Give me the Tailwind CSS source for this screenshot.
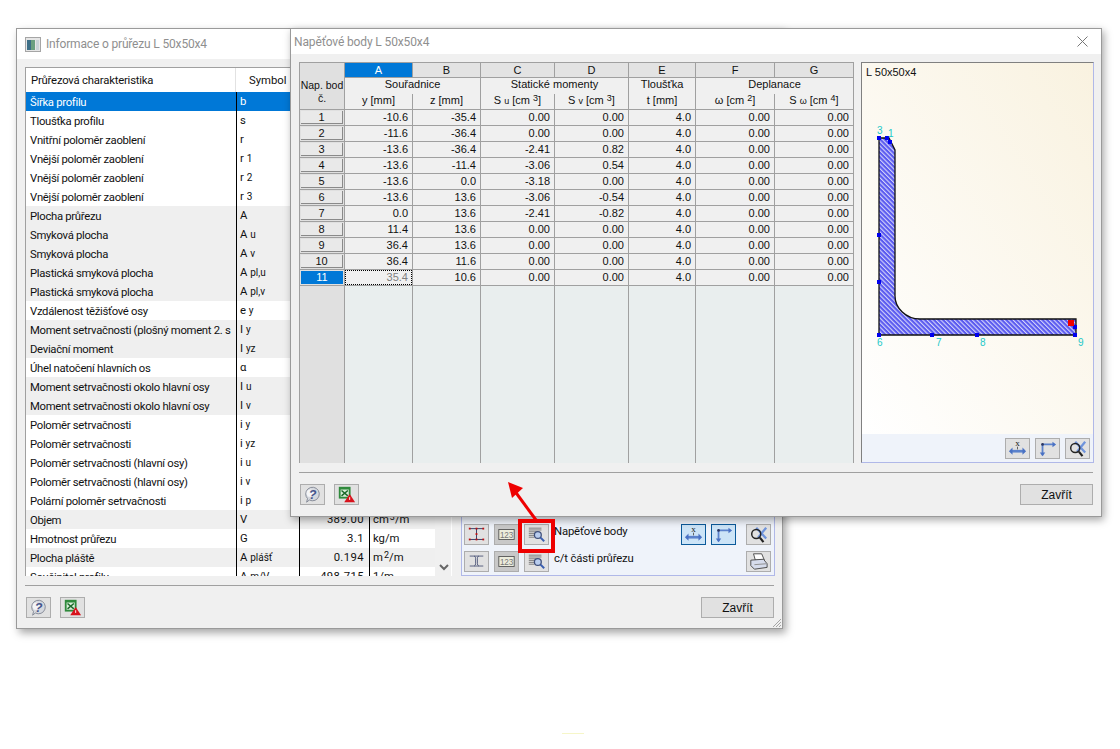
<!DOCTYPE html>
<html lang="en">
<head>
<meta charset="UTF-8">
<title>Napěťové body</title>
<script src="https://cdn.jsdelivr.net/npm/@tailwindcss/browser@4"></script>
</head>
<body class="bg-white overflow-hidden font-['Liberation_Sans',sans-serif]">

<!-- shared icons -->
<svg width="0" height="0" class="absolute">
  <defs>
    <pattern id="hatch" width="3.200" height="3.200" patternUnits="userSpaceOnUse" patternTransform="rotate(-45)">
      <rect width="3.200" height="3.200" fill="#5a5af0"/>
      <rect width="1.100" height="3.200" fill="#d4d4fa"/>
    </pattern>
  </defs>
  <symbol id="i-help" viewBox="0 0 25 21">
    <path d="M5 10a7.500 7.500 0 1 1 4 6.600L6 19l1-4a7 7 0 0 1-2-5z" fill="#d5d8de" stroke="#7f8592"/>
    <circle cx="10" cy="9" r="4" fill="#f4f5f7"/>
    <text x="12.500" y="15" text-anchor="middle" font-size="14" font-weight="700" font-style="italic" fill="#46558c" font-family="Liberation Sans">?</text>
  </symbol>
  <symbol id="i-excel" viewBox="0 0 25 21">
    <rect x="4" y="2" width="13" height="13" fill="#2f8a3c"/>
    <rect x="6" y="5" width="9" height="8" fill="#d9eeda"/>
    <path d="M7 6l7 6M14 6l-7 6" stroke="#1c6a2a" stroke-width="1.600"/>
    <path d="M16 10l6 9H10z" fill="#d8121c"/>
    <path d="M16 13.500v3" stroke="#fff"/>
  </symbol>
  <symbol id="i-section-red" viewBox="0 0 25 21">
    <path d="M5 4h15M5 16h15M12.500 4v12" stroke="#2a3560" fill="none"/>
    <g fill="#c01010"><rect x="4" y="3" width="2" height="2"/><rect x="11.500" y="3" width="2" height="2"/><rect x="19" y="3" width="2" height="2"/><rect x="4" y="15" width="2" height="2"/><rect x="11.500" y="15" width="2" height="2"/><rect x="19" y="15" width="2" height="2"/><rect x="11.500" y="9" width="2" height="2"/></g>
  </symbol>
  <symbol id="i-section" viewBox="0 0 25 21">
    <path d="M5 4.500h15M5 15.500h15M10 4.500c1.500.500 1.500 2 1.500 3v5.500c0 1-.5 2-1.500 2.500M15 4.500c-1.500.500-1.500 2-1.500 3v5.500c0 1 .5 2 1.500 2.500" stroke="#2a3560" stroke-width=".8" fill="none"/>
  </symbol>
  <symbol id="i-123" viewBox="0 0 25 21">
    <rect x="4" y="5" width="17" height="11" fill="#ececdc" stroke="#555"/>
    <text x="12.500" y="14" text-anchor="middle" font-size="9" fill="#777" font-family="Liberation Sans">123</text>
  </symbol>
  <symbol id="i-find" viewBox="0 0 25 21">
    <path d="M4 3.500h14M4 5.500h14M4 7.500h10M4 9.500h7M4 11.500h6M4 13.500h6" stroke="#777" fill="none"/>
    <circle cx="14" cy="11" r="3.800" fill="#b9cdee" stroke="#40507a" stroke-width="1.400"/>
    <path d="M17 14l4 4" stroke="#3b5fb0" stroke-width="2.200"/>
  </symbol>
  <symbol id="i-dim" viewBox="0 0 25 21">
    <text x="12.500" y="8" text-anchor="middle" font-size="10" fill="#222" font-family="Liberation Serif">x</text>
    <path d="M5 13.500h15" stroke="#5b82cc" stroke-width="3"/>
    <path d="M7 9.500L3 13.500 7 17.500zM18 9.500l4 4-4 4z" fill="#4a72c4"/>
    <path d="M12.500 8.500v3" stroke="#555"/>
  </symbol>
  <symbol id="i-axes" viewBox="0 0 25 21">
    <path d="M7 6v12M7 6h13" stroke="#5b82cc" stroke-width="2" fill="none"/>
    <path d="M4 15l3 4 3-4zM18 3l4 3-4 3z" fill="#4a72c4"/>
    <circle cx="7" cy="6" r="1.500" fill="#2a3560"/>
  </symbol>
  <symbol id="i-zoomx" viewBox="0 0 25 21">
    <path d="M10 3l11 12M21 3L12 14" stroke="#6f94dc" stroke-width="2.500"/>
    <circle cx="10" cy="10" r="5" fill="none" stroke="#222" stroke-width="1.600"/>
    <path d="M14 14l4 5" stroke="#222" stroke-width="2.400"/>
  </symbol>
  <symbol id="i-print" viewBox="0 0 25 21">
    <path d="M7 2h9l3 7H9z" fill="#fff" stroke="#444"/>
    <path d="M4 9l14-1 4 5v4l-14 2-4-4z" fill="#d6dcec" stroke="#444"/>
    <path d="M8 14l13-1" stroke="#888"/>
  </symbol>
</svg>

<!-- rear window -->
<div class="absolute left-[16px] top-[28px] w-[767px] h-[601px] flex flex-col bg-[#f0f0f0] border border-[#9a9a9a] shadow-[3px_4px_8px_rgba(0,0,0,0.35)]">
  <div class="h-[30px] bg-white flex items-center pl-[8px] gap-[5px] text-[12px] tracking-[-0.17px] font-['Roboto',sans-serif] text-[#8f8f8f]">
    <svg width="16" height="15" viewBox="0 0 16 15"><rect x=".5" y=".5" width="15" height="14" fill="#e6e6e6" stroke="#a5a5a5"/><rect x="2" y="3" width="4" height="10" fill="#3d6f87"/><rect x="6" y="3" width="4" height="10" fill="#6aa080"/><rect x="11" y="3" width="3" height="10" fill="#c9d4d8"/></svg>
    <span>Informace o průřezu L 50x50x4</span>
  </div>
  <div class="flex gap-[9px] pt-[8px] pl-[8px] pr-[7px] h-[517px] text-[#111] font-['Roboto',sans-serif]">
    <div class="w-[427px] shrink-0 h-[509px] flex flex-col overflow-hidden bg-white border-l border-t border-[#a0a0a0] text-[11.300px] leading-[19px]">
      <div class="h-[24px] shrink-0 flex items-center">
        <div class="w-[210px] h-full pl-[5px] flex items-center border-r border-[#e2e2e2] tracking-[-0.2px]">Průřezová charakteristika</div>
        <div class="pl-[13px]">Symbol</div>
      </div>
      <div class="flex min-h-0">
        <div id="list" class="w-[409px] shrink-0"></div>
        <div class="flex-1 bg-[#f0f0f0] border-r border-white relative">
          <svg class="absolute left-[4px] bottom-[5px]" width="10" height="7" viewBox="0 0 10 7"><path d="M1 1l4 4 4-4" stroke="#666" stroke-width="2" fill="none"/></svg>
        </div>
      </div>
    </div>
    <div class="w-[314px] shrink-0 h-[509px] flex flex-col justify-end">
      <div class="bg-[#eff3fa] border border-t-0 border-[#b0b8e8] h-[60px] pl-[2px] flex flex-col gap-[6px] pt-[8px] text-[11.300px] tracking-[-0.15px]">
        <div class="flex items-start">
          <button class="w-[25px] h-[21px] border border-[#adadad] bg-[#e1e1e1]"><svg class="w-full h-full"><use href="#i-section-red"/></svg></button>
          <button class="w-[25px] h-[21px] ml-[5px] border border-[#adadad] bg-[#c8c8c8]"><svg class="w-full h-full"><use href="#i-123"/></svg></button>
          <button class="w-[25px] h-[21px] ml-[5px] border border-[#adadad] bg-[#e1e1e1]"><svg class="w-full h-full"><use href="#i-find"/></svg></button>
          <span class="w-[127px] ml-[5px]">Napěťové body</span>
          <button class="w-[25px] h-[21px] border border-[#0b5a9a] bg-[#cce4f7]"><svg class="w-full h-full"><use href="#i-dim"/></svg></button>
          <button class="w-[25px] h-[21px] ml-[5px] border border-[#0b5a9a] bg-[#cce4f7]"><svg class="w-full h-full"><use href="#i-axes"/></svg></button>
          <button class="w-[25px] h-[21px] ml-[10px] border border-[#adadad] bg-[#e1e1e1]"><svg class="w-full h-full"><use href="#i-zoomx"/></svg></button>
        </div>
        <div class="flex items-start">
          <button class="w-[25px] h-[21px] border border-[#adadad] bg-[#e1e1e1]"><svg class="w-full h-full"><use href="#i-section"/></svg></button>
          <button class="w-[25px] h-[21px] ml-[5px] border border-[#adadad] bg-[#c8c8c8]"><svg class="w-full h-full"><use href="#i-123"/></svg></button>
          <button class="w-[25px] h-[21px] ml-[5px] border border-[#adadad] bg-[#e1e1e1]"><svg class="w-full h-full"><use href="#i-find"/></svg></button>
          <span class="w-[192px] ml-[5px]">c/t části průřezu</span>
          <button class="w-[25px] h-[21px] border border-[#adadad] bg-[#e1e1e1]"><svg class="w-full h-full"><use href="#i-print"/></svg></button>
        </div>
      </div>
    </div>
  </div>
  <div class="mx-[8px] mt-[9px] border-t border-[#a0a0a0] pt-[11px] pl-[1px] flex items-start gap-[9px]">
    <button class="w-[25px] h-[21px] border border-[#adadad] bg-[#e1e1e1]"><svg class="w-full h-full"><use href="#i-help"/></svg></button>
    <button class="w-[25px] h-[21px] border border-[#adadad] bg-[#e1e1e1]"><svg class="w-full h-full"><use href="#i-excel"/></svg></button>
    <button class="ml-auto w-[73px] h-[21px] border border-[#adadad] bg-[#e1e1e1] text-[12px] text-[#111]">Zavřít</button>
  </div>
  <svg class="absolute right-0 bottom-0" width="10" height="10" viewBox="0 0 10 10"><path d="M9 1L1 9M9 4L4 9M9 7L7 9" stroke="#a5a5a5"/></svg>
</div>

<!-- front window -->
<div class="absolute left-[290px] top-[28px] w-[812px] h-[489px] flex flex-col bg-[#f0f0f0] border border-[#9a9a9a] shadow-[2px_3px_8px_rgba(0,0,0,0.35)] text-[#111]">
  <div class="h-[25px] shrink-0 bg-white flex items-center justify-between pl-[3px] pr-[13px] text-[12px] tracking-[-0.13px] font-['Roboto',sans-serif] text-[#8f8f8f]">
    <span>Napěťové body L 50x50x4</span>
    <svg width="11" height="11" viewBox="0 0 11 11"><path d="M.5.500l10 10M10.500.500l-10 10" stroke="#777"/></svg>
  </div>
  <div class="flex gap-[7px] pt-[8px] pl-[8px] h-[409px] shrink-0">
    <div id="grid" class="w-[555px] h-[401px] border-l border-t border-[#a0a0a0] grid grid-cols-[45px_68px_68px_74px_74px_67px_79px_79px] grid-rows-[15px_16px_16px_repeat(11,16px)_1fr] text-[11px] leading-[15px] text-center">
      <div class="row-span-3 bg-[#e0e0e0] border-r border-b border-[#a0a0a0] pt-[16px] leading-[13px] text-[10.500px] whitespace-nowrap">Nap. bod<br>č.</div>
      <div class="bg-[#0078d7] text-white border-r border-b border-[#a0a0a0]">A</div>
      <div class="bg-[#e3e3e3] border-r border-b border-[#a0a0a0]">B</div>
      <div class="bg-[#e3e3e3] border-r border-b border-[#a0a0a0]">C</div>
      <div class="bg-[#e3e3e3] border-r border-b border-[#a0a0a0]">D</div>
      <div class="bg-[#e3e3e3] border-r border-b border-[#a0a0a0]">E</div>
      <div class="bg-[#e3e3e3] border-r border-b border-[#a0a0a0]">F</div>
      <div class="bg-[#e3e3e3] border-r border-b border-[#a0a0a0]">G</div>
      <div class="col-span-2 bg-[#f0f0f0] border-r border-[#a0a0a0] leading-[13px]">Souřadnice</div>
      <div class="col-span-2 bg-[#f0f0f0] border-r border-[#a0a0a0] leading-[13px]">Statické momenty</div>
      <div class="bg-[#f0f0f0] border-r border-[#a0a0a0] leading-[13px]">Tloušťka</div>
      <div class="col-span-2 bg-[#f0f0f0] border-r border-[#a0a0a0] leading-[13px]">Deplanace</div>
      <div class="bg-[#f0f0f0] border-r border-b border-[#a0a0a0] leading-[13px]">y [mm]</div>
      <div class="bg-[#f0f0f0] border-r border-b border-[#a0a0a0] leading-[13px]">z [mm]</div>
      <div class="bg-[#f0f0f0] border-r border-b border-[#a0a0a0] leading-[13px]">S <span class="text-[9px]">u</span> [cm <sup class="text-[9px] top-[-3px]">3</sup>]</div>
      <div class="bg-[#f0f0f0] border-r border-b border-[#a0a0a0] leading-[13px]">S <span class="text-[9px]">v</span> [cm <sup class="text-[9px] top-[-3px]">3</sup>]</div>
      <div class="bg-[#f0f0f0] border-r border-b border-[#a0a0a0] leading-[13px]">t [mm]</div>
      <div class="bg-[#f0f0f0] border-r border-b border-[#a0a0a0] leading-[13px]">ω [cm <sup class="text-[9px] top-[-3px]">2</sup>]</div>
      <div class="bg-[#f0f0f0] border-r border-b border-[#a0a0a0] leading-[13px]">S <span class="text-[9px]">ω</span> [cm <sup class="text-[9px] top-[-3px]">4</sup>]</div>
    </div>

    <div class="w-[233px] h-[401px] flex flex-col border-l border-t border-[#808080] border-r-[#b0b8e8] border-b-[#b0b8e8] border-r border-b">
      <div class="relative flex-1 bg-linear-to-bl from-[#f9f2e0] to-white">
        <span class="absolute left-[4px] top-[1px] text-[11px] text-[#111]">L 50x50x4</span>
        <svg class="absolute inset-0 w-full h-full" viewBox="862 63 231 371">
          <path d="M879 138H889L895 150V296C895 308 906 319 920 319H1076V335H879Z" fill="url(#hatch)" stroke="#111" stroke-width="1.300"/>
          <g fill="#0000ee">
            <rect x="877" y="136" width="4" height="4"/><rect x="885" y="136" width="4" height="4"/><rect x="888" y="140" width="4" height="4"/>
            <rect x="877" y="233" width="4" height="4"/><rect x="877" y="280" width="4" height="4"/>
            <rect x="877" y="333" width="4" height="4"/><rect x="930" y="333" width="4" height="4"/><rect x="975" y="333" width="4" height="4"/>
            <rect x="1073" y="333" width="4" height="4"/><rect x="1073" y="325" width="4" height="4"/>
          </g>
          <rect x="1068" y="320" width="6" height="6" fill="#ee0000"/>
          <g fill="#22c8c8" font-size="10" font-family="Liberation Sans">
            <text x="877" y="134">3</text><text x="888" y="137">1</text>
            <text x="877" y="346">6</text><text x="936" y="346">7</text><text x="980" y="346">8</text><text x="1078" y="346">9</text>
          </g>
        </svg>
      </div>
      <div class="h-[28px] shrink-0 bg-[#eff3fa] flex justify-end gap-[5px] pt-[4px] pr-[3px]">
        <button class="w-[25px] h-[21px] border border-[#adadad] bg-[#e1e1e1]"><svg class="w-full h-full"><use href="#i-dim"/></svg></button>
        <button class="w-[25px] h-[21px] border border-[#adadad] bg-[#e1e1e1]"><svg class="w-full h-full"><use href="#i-axes"/></svg></button>
        <button class="w-[25px] h-[21px] border border-[#adadad] bg-[#e1e1e1]"><svg class="w-full h-full"><use href="#i-zoomx"/></svg></button>
      </div>
    </div>
  </div>
  <div class="mx-[8px] mt-[9px] border-t border-[#a0a0a0] pt-[11px] pl-[1px] flex items-start gap-[9px]">
    <button class="w-[25px] h-[21px] border border-[#adadad] bg-[#e1e1e1]"><svg class="w-full h-full"><use href="#i-help"/></svg></button>
    <button class="w-[25px] h-[21px] border border-[#adadad] bg-[#e1e1e1]"><svg class="w-full h-full"><use href="#i-excel"/></svg></button>
    <button class="ml-auto w-[73px] h-[21px] border border-[#adadad] bg-[#e1e1e1] text-[12px] text-[#111]">Zavřít</button>
  </div>
</div>

<!-- callout over both windows -->
<div class="absolute left-[518px] top-[519px] w-[37px] h-[34px] border-4 border-[#ee0000]"></div>
<svg class="absolute left-[500px] top-[475px]" width="45" height="50" viewBox="500 475 45 50">
  <path d="M536 520L514 490" stroke="#ee0000" stroke-width="3"/>
  <path d="M508 482L523 488 512 498Z" fill="#ee0000"/>
</svg>
<div class="absolute left-[562px] top-[733px] w-[22px] h-px bg-[#f6f6c8]"></div>

<script>
  // rear list: name, symbol, subscript, value, unit, row style
  const sel = 'bg-[#0078d7] text-white', grey = 'bg-[#efefef]', plain = 'bg-white';
  const sup = n => `<sup class="text-[9px] top-[-3px] ml-[1px]">${n}</sup>`;
  const listRows = [
    ['Šířka profilu','b','','','',sel],['Tloušťka profilu','s','','','',plain],['Vnitřní poloměr zaoblení','r','','','',plain],
    ['Vnější poloměr zaoblení','r','1','','',plain],['Vnější poloměr zaoblení','r','2','','',plain],['Vnější poloměr zaoblení','r','3','','',plain],
    ['Plocha průřezu','A','','','',grey],['Smyková plocha','A','u','','',grey],['Smyková plocha','A','v','','',grey],
    ['Plastická smyková plocha','A','pl,u','','',grey],['Plastická smyková plocha','A','pl,v','','',grey],
    ['Vzdálenost těžišťové osy','e','y','','',plain],['Moment setrvačnosti (plošný moment 2. s','I','y','','',grey],['Deviační moment','I','yz','','',grey],
    ['Úhel natočení hlavních os','α','','','',plain],['Moment setrvačnosti okolo hlavní osy','I','u','','',grey],['Moment setrvačnosti okolo hlavní osy','I','v','','',grey],
    ['Poloměr setrvačnosti','i','y','','',plain],['Poloměr setrvačnosti','i','yz','','',plain],['Poloměr setrvačnosti (hlavní osy)','i','u','','',plain],
    ['Poloměr setrvačnosti (hlavní osy)','i','v','','',plain],['Polární poloměr setrvačnosti','i','p','','',plain],
    ['Objem','V','','389.00',`cm${sup(3)}/m`,grey],['Hmotnost průřezu','G','','3.1','kg/m',plain],['Plocha pláště','A','plášť','0.194',`m${sup(2)}/m`,grey],
    ['Součinitel profilu','A','m/V','498.715','1/m',plain]
  ];
  document.getElementById('list').innerHTML = listRows.map(r => `
    <div class="flex h-[19px] pt-[1px] ${r[5]}">
      <div class="w-[210px] shrink-0 pl-[4px] whitespace-nowrap overflow-hidden tracking-[-0.3px]">${r[0]}</div>
      <div class="w-[63px] shrink-0 pl-[3px] border-l border-black -mt-[1px]">${r[1]} <span class="text-[10px]">${r[2]}</span></div>
      <div class="w-[70px] shrink-0 pr-[5px] text-right border-l border-black -mt-[1px] tracking-[0.4px]">${r[3]}</div>
      <div class="flex-1 pl-[3px] border-l border-black whitespace-nowrap -mt-[1px]">${r[4]}</div>
    </div>`).join('');

  // front table data
  const pts = [
    ['-10.6','-35.4','0.00','0.00'],['-11.6','-36.4','0.00','0.00'],['-13.6','-36.4','-2.41','0.82'],['-13.6','-11.4','-3.06','0.54'],
    ['-13.6','0.0','-3.18','0.00'],['-13.6','13.6','-3.06','-0.54'],['0.0','13.6','-2.41','-0.82'],['11.4','13.6','0.00','0.00'],
    ['36.4','13.6','0.00','0.00'],['36.4','11.6','0.00','0.00'],['35.4','10.6','0.00','0.00']
  ];
  const cell = 'bg-[#f0f0f0] border-r border-b border-[#a0a0a0] text-right pr-[4px]';
  let html = '';
  pts.forEach((p, i) => {
    const last = i === pts.length - 1;
    html += last
      ? `<div class="bg-[#e0e0e0] border-r border-b border-[#a0a0a0] p-[1px]"><div class="bg-[#0078d7] text-white h-full leading-[12px]">${i + 1}</div></div>
         <div class="border-r border-b border-[#a0a0a0] bg-[#f0f0f0]"><div class="border border-dotted border-black h-full text-right pr-[3px] text-[#808080] leading-[13px]">${p[0]}</div></div>`
      : `<div class="bg-[#e0e0e0] border-r border-b border-[#a0a0a0] p-[1px]"><div class="bg-[#e9e9e9] border-r border-b border-[#8a8a8a] h-full leading-[12px]">${i + 1}</div></div>
         <div class="${cell}">${p[0]}</div>`;
    html += `<div class="${cell}">${p[1]}</div><div class="${cell}">${p[2]}</div><div class="${cell}">${p[3]}</div>
             <div class="${cell}">4.0</div><div class="${cell}">0.00</div><div class="${cell}">0.00</div>`;
  });
  // blank area under the rows
  html += '<div class="bg-[#e0e0e0] border-r border-[#a0a0a0]"></div>';
  for (let c = 0; c < 7; c++) html += '<div class="bg-[#e9eeee] border-r border-[#a0a0a0]"></div>';
  document.getElementById('grid').insertAdjacentHTML('beforeend', html);
</script>
</body>
</html>
